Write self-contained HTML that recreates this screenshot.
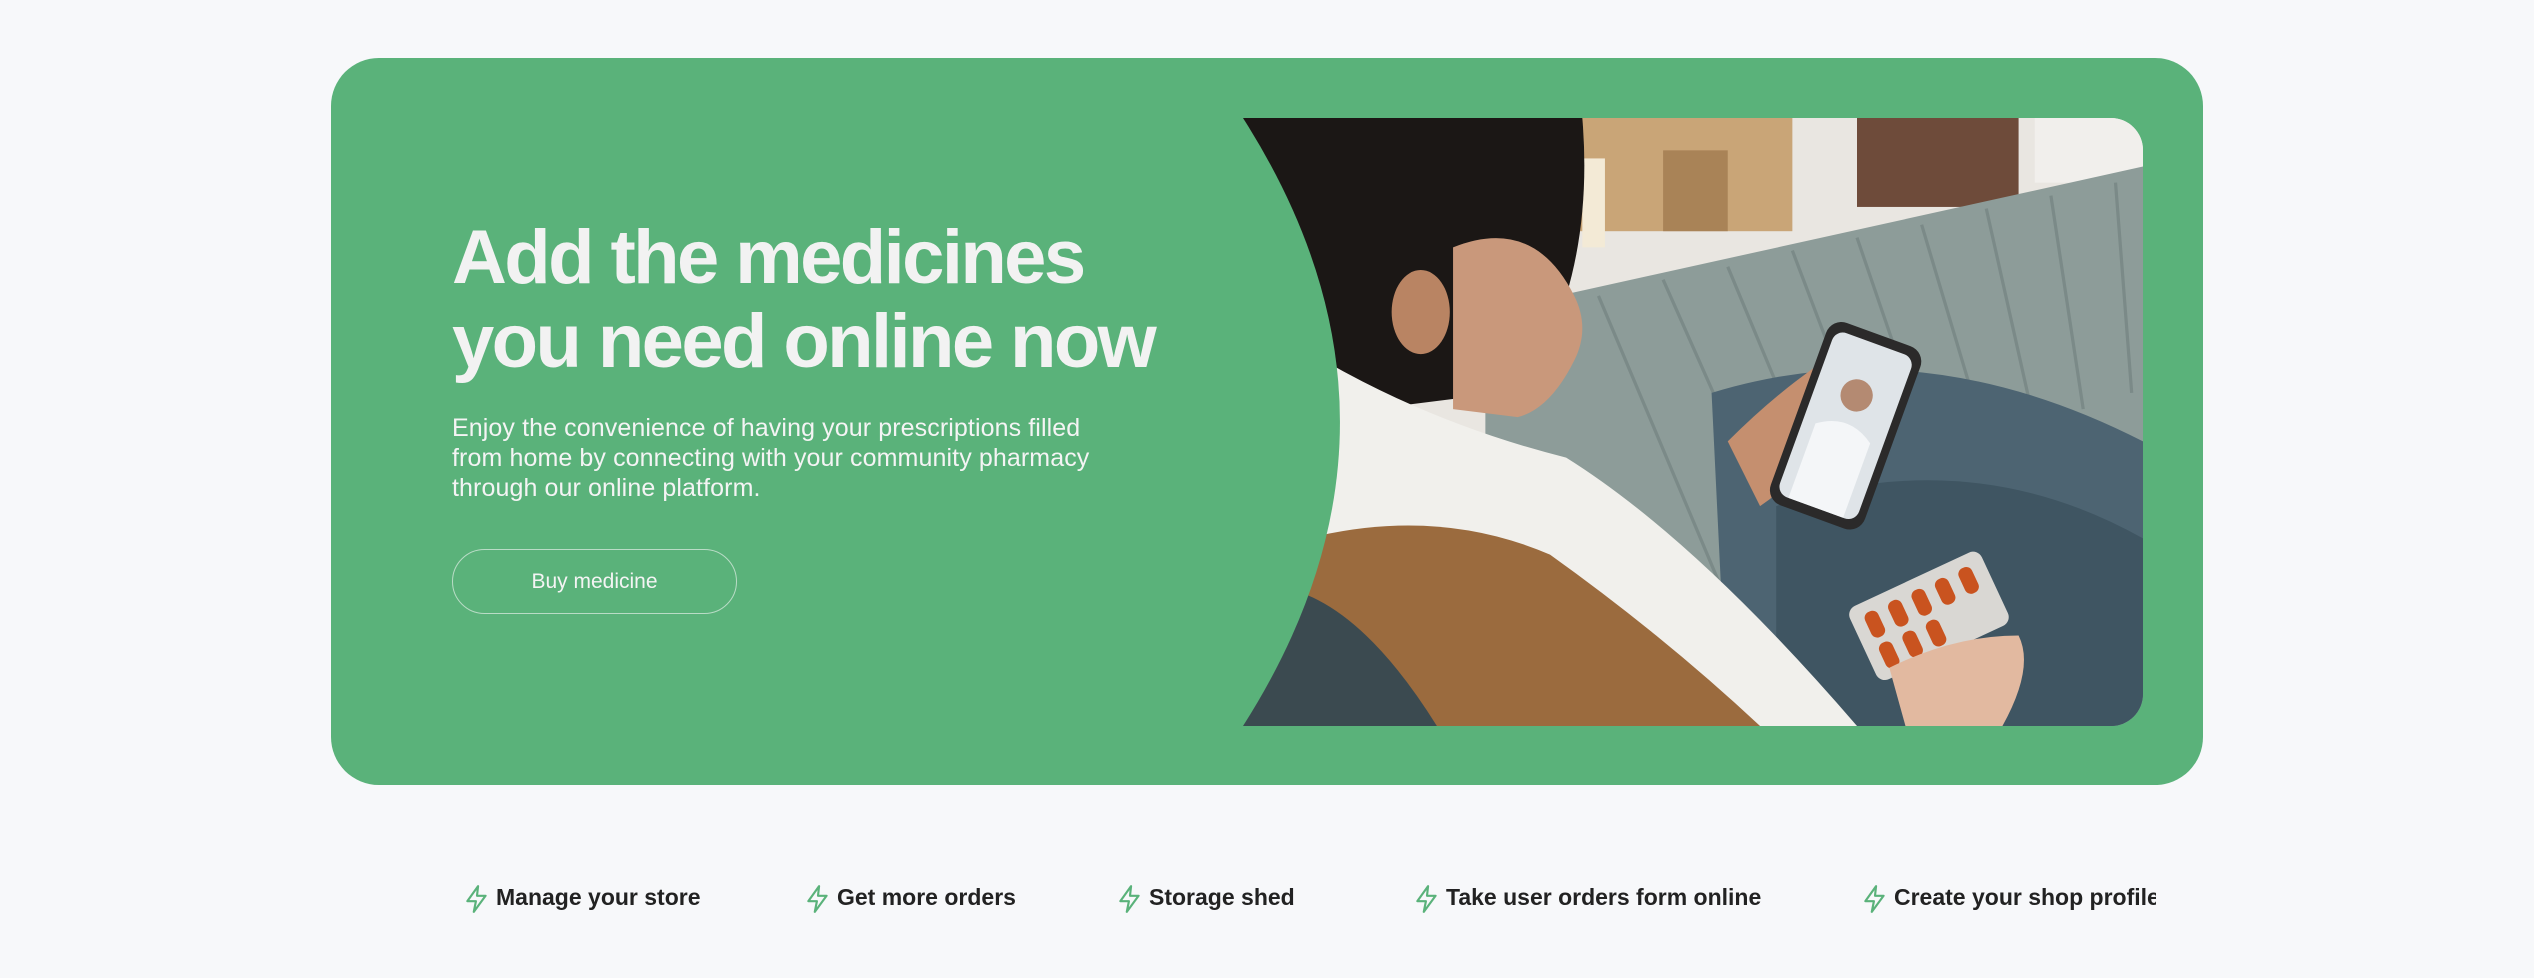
<!DOCTYPE html>
<html><head><meta charset="utf-8"><style>
html,body{margin:0;padding:0;background:#f7f8fa;width:2534px;height:978px;overflow:hidden;font-family:"Liberation Sans",sans-serif}
.card{position:absolute;left:331px;top:58px;width:1872px;height:727px;background:#5ab27a;border-radius:48px}
h1{position:absolute;left:452px;top:216px;margin:0;font-size:76px;line-height:84px;font-weight:700;color:#f2f2f2;letter-spacing:-2.6px;white-space:nowrap}
p{position:absolute;left:452px;top:413px;margin:0;font-size:25px;line-height:30px;color:#f4f4f4;white-space:nowrap;letter-spacing:0.1px}
.btn{position:absolute;left:452px;top:549px;width:283px;height:63px;border:1.5px solid #b9dcc6;border-radius:33px;color:#f4f4f4;font-size:21px;text-align:center;line-height:63px}
.img{position:absolute;left:1243px;top:118px;width:900px;height:608px;border-radius:0 32px 32px 0;overflow:hidden}
.feat{position:absolute;top:880px;font-size:23px;font-weight:700;color:#222;white-space:nowrap;letter-spacing:0px;line-height:34px}
.feat svg{position:absolute;left:-32px;top:4px}
</style></head><body>
<div class="card"></div>
<h1>Add the medicines<br>you need online now</h1>
<p>Enjoy the convenience of having your prescriptions filled<br>from home by connecting with your community pharmacy<br>through our online platform.</p>
<div class="btn">Buy medicine</div>
<div class="img">
<svg width="900" height="608" viewBox="0 0 557 376" preserveAspectRatio="none">
<rect width="557" height="376" fill="#e9e6e1"/>
<rect x="190" y="0" width="150" height="70" fill="#c9a577"/>
<rect x="260" y="20" width="40" height="50" fill="#a98357"/>
<rect x="210" y="25" width="14" height="55" fill="#f3ead6"/>
<rect x="380" y="0" width="100" height="55" fill="#6e4b3a"/>
<rect x="490" y="0" width="67" height="40" fill="#f1efec"/>
<path d="M150 120 L557 30 L557 230 L150 376 Z" fill="#8d9c99"/>
<g stroke="#7b8a88" stroke-width="2">
<path d="M220 110 L300 300"/><path d="M260 100 L340 280"/><path d="M300 92 L370 260"/><path d="M340 82 L400 240"/><path d="M380 74 L430 220"/><path d="M420 66 L460 200"/><path d="M460 56 L490 190"/><path d="M500 48 L520 180"/><path d="M540 40 L550 170"/></g>
<path d="M290 170 Q420 130 557 200 L557 376 L300 376 Z" fill="#4d6472"/>
<path d="M330 240 Q450 200 557 260 L557 376 L330 376 Z" fill="#3f5562"/>
<path d="M0 0 L210 0 Q215 60 200 110 Q180 150 160 170 L80 180 L0 120 Z" fill="#1b1715"/>
<path d="M130 80 Q180 60 205 110 Q215 130 205 150 Q190 180 170 185 L130 180 Z" fill="#c9987b"/>
<ellipse cx="110" cy="120" rx="18" ry="26" fill="#b98463"/>
<path d="M50 150 Q120 190 200 210 Q280 260 380 376 L60 376 Q40 250 50 150 Z" fill="#f1f0ec"/>
<path d="M40 260 Q120 240 190 270 Q260 320 320 376 L40 376 Z" fill="#9b6b3e"/>
<path d="M0 290 Q60 280 120 376 L0 376 Z" fill="#3b4a50"/>
<path d="M300 200 Q330 170 360 150 L380 170 Q350 220 320 240 Z" fill="#c58f6f"/>
<g transform="rotate(20 372 190)"><rect x="342" y="130" width="62" height="120" rx="10" fill="#2b2a2a"/><rect x="347" y="136" width="52" height="108" rx="7" fill="#dfe4e8"/><circle cx="373" cy="170" r="10" fill="#b48a72"/><path d="M355 244 L355 195 Q373 182 391 195 L391 244 Z" fill="#f4f6f8"/></g>
<g transform="rotate(-25 420 310)"><rect x="380" y="285" width="90" height="50" rx="6" fill="#d9d7d3"/>
<g fill="#c9531f"><rect x="388" y="292" width="9" height="17" rx="4"/><rect x="404" y="292" width="9" height="17" rx="4"/><rect x="420" y="292" width="9" height="17" rx="4"/><rect x="436" y="292" width="9" height="17" rx="4"/><rect x="452" y="292" width="9" height="17" rx="4"/><rect x="388" y="313" width="9" height="17" rx="4"/><rect x="404" y="313" width="9" height="17" rx="4"/><rect x="420" y="313" width="9" height="17" rx="4"/></g></g>
<path d="M400 340 Q440 320 480 320 Q490 340 470 376 L410 376 Z" fill="#e2b9a0"/>
<path d="M0 0 L0 376 Q120 188 0 0 Z" fill="#5ab27a"/>
</svg>
</div>
<div class="feat" style="left:496px"><svg width="26" height="30" viewBox="0 0 24 28"><path d="M13 2 L3 16 L11 16 L9 26 L20 11 L12 11 Z" fill="none" stroke="#5ab27a" stroke-width="2" stroke-linejoin="round"/></svg>Manage your store</div>
<div class="feat" style="left:837px"><svg width="26" height="30" viewBox="0 0 24 28"><path d="M13 2 L3 16 L11 16 L9 26 L20 11 L12 11 Z" fill="none" stroke="#5ab27a" stroke-width="2" stroke-linejoin="round"/></svg>Get more orders</div>
<div class="feat" style="left:1149px"><svg width="26" height="30" viewBox="0 0 24 28"><path d="M13 2 L3 16 L11 16 L9 26 L20 11 L12 11 Z" fill="none" stroke="#5ab27a" stroke-width="2" stroke-linejoin="round"/></svg>Storage shed</div>
<div class="feat" style="left:1446px"><svg width="26" height="30" viewBox="0 0 24 28"><path d="M13 2 L3 16 L11 16 L9 26 L20 11 L12 11 Z" fill="none" stroke="#5ab27a" stroke-width="2" stroke-linejoin="round"/></svg>Take user orders form online</div>
<div class="feat" style="left:1894px;width:262px;overflow:hidden">Create your shop profile</div>
<svg style="position:absolute;left:1862px;top:884px" width="26" height="30" viewBox="0 0 24 28"><path d="M13 2 L3 16 L11 16 L9 26 L20 11 L12 11 Z" fill="none" stroke="#5ab27a" stroke-width="2" stroke-linejoin="round"/></svg>
</body></html>
